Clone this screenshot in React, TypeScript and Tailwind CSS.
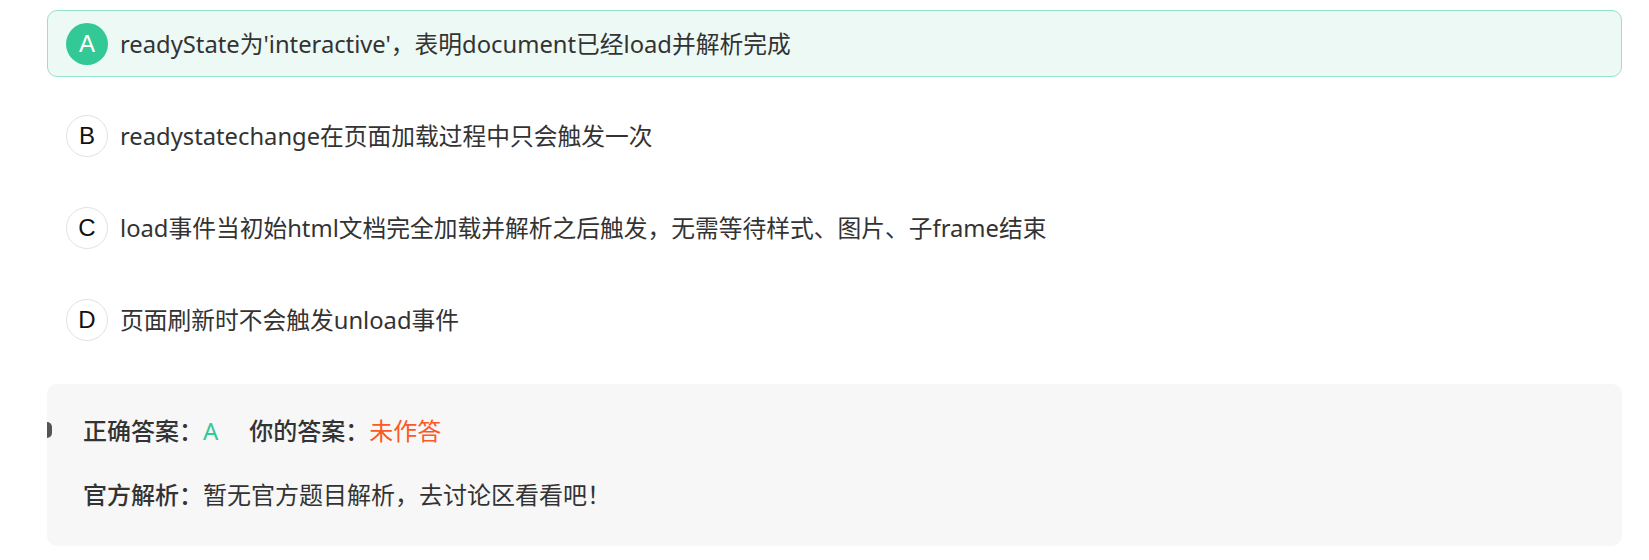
import React from "react";

interface OptionItem {
	key: string;
	text: string;
}

const options: OptionItem[] = [
	{ key: "A", text: "readyState为'interactive'，表明document已经load并解析完成" },
	{ key: "B", text: "readystatechange在页面加载过程中只会触发一次" },
	{
		key: "C",
		text: "load事件当初始html文档完全加载并解析之后触发，无需等待样式、图片、子frame结束",
	},
	{ key: "D", text: "页面刷新时不会触发unload事件" },
];

const correct = "A";

const App = () => {
	return (
		<div
			className="w-full bg-white pt-[10px] pb-[14px] pl-[47px] pr-[27px] text-[#333]"
			style={{ fontFamily: '"Noto Sans", "Noto Sans CJK SC", sans-serif' }}
		>
			{/* options */}
			<div className="flex flex-col gap-[25px]">
				{options.map((opt) => {
					const active = opt.key === correct;
					return (
						<div
							key={opt.key}
							className={
								active
									? "flex h-[67px] items-center gap-3 rounded-[10px] border border-[#94e2c7] bg-[#edf9f5] pl-[18px]"
									: "flex h-[67px] items-center gap-3 rounded-[10px] border border-transparent pl-[18px]"
							}
						>
							<span
								className={
									active
										? "flex h-[42px] w-[42px] shrink-0 items-center justify-center rounded-full bg-[#33c996] text-[24px] text-white"
										: "flex h-[42px] w-[42px] shrink-0 items-center justify-center rounded-full border border-[#e2e2e2] bg-white text-[24px] text-[#111]"
								}
								style={{ fontFamily: '"Liberation Sans", sans-serif' }}
							>
								{opt.key}
							</span>
							<span className="text-[23.75px] leading-8">{opt.text}</span>
						</div>
					);
				})}
			</div>

			{/* answer panel */}
			<div className="relative mt-[31px] flex flex-col gap-8 rounded-[10px] bg-[#f7f7f7] pt-[31px] pb-[35px] pl-9 text-[24px] leading-8">
				<span className="absolute left-0 top-[38px] h-4 w-[5px] rounded-r-full bg-[#555]" />
				<div className="flex">
					<span className="font-medium">正确答案：</span>
					<span className="text-[#33c996]">A</span>
					<span className="ml-[31px] font-medium">你的答案：</span>
					<span className="text-[#fb5a26]">未作答</span>
				</div>
				<div className="flex">
					<span className="font-medium">官方解析：</span>
					<span>暂无官方题目解析，去讨论区看看吧！</span>
				</div>
			</div>
		</div>
	);
};

export default App;
